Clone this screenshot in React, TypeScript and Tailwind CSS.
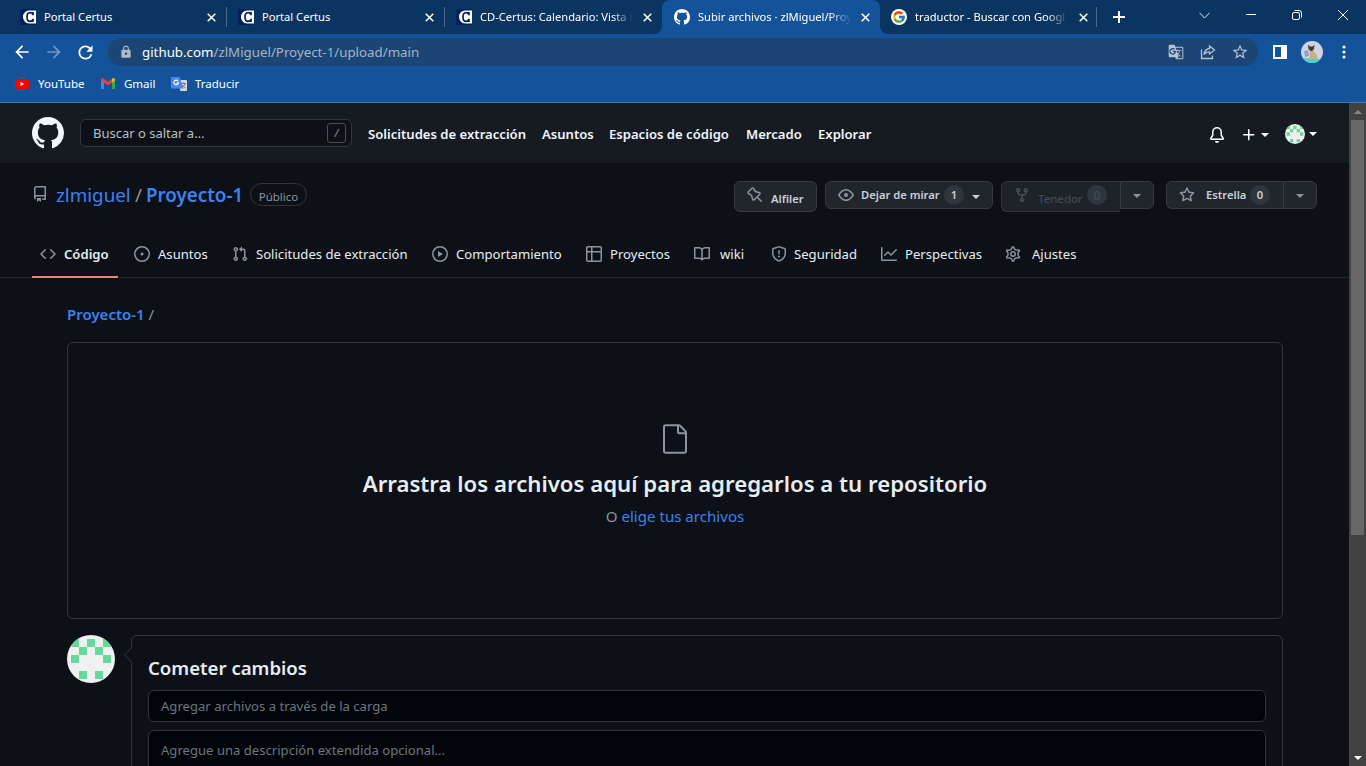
import React from "react";
import { FcGoogle } from "react-icons/fc";
import { MdLock, MdRefresh, MdArrowBack, MdArrowForward, MdStarBorder, MdGTranslate } from "react-icons/md";

const P = {
  mark: "M8 0C3.58 0 0 3.58 0 8c0 3.54 2.29 6.53 5.47 7.59.4.07.55-.17.55-.38 0-.19-.01-.82-.01-1.49-2.01.37-2.53-.49-2.69-.94-.09-.23-.48-.94-.82-1.13-.28-.15-.68-.52-.01-.53.63-.01 1.08.58 1.23.82.72 1.21 1.87.87 2.33.66.07-.52.28-.87.51-1.07-1.78-.2-3.64-.89-3.64-3.95 0-.87.31-1.59.82-2.15-.08-.2-.36-1.02.08-2.12 0 0 .67-.21 2.2.82.64-.18 1.32-.27 2-.27.68 0 1.36.09 2 .27 1.53-1.04 2.2-.82 2.2-.82.44 1.1.16 1.92.08 2.12.51.56.82 1.27.82 2.15 0 3.07-1.87 3.75-3.65 3.95.29.25.54.73.54 1.48 0 1.07-.01 1.93-.01 2.2 0 .21.15.46.55.38A8.013 8.013 0 0016 8c0-4.42-3.58-8-8-8z",
  code: "M4.72 3.22a.75.75 0 011.06 1.06L2.06 8l3.72 3.72a.75.75 0 11-1.06 1.06L.47 8.53a.75.75 0 010-1.06l4.25-4.25zm6.56 0a.75.75 0 10-1.06 1.06L13.94 8l-3.72 3.72a.75.75 0 101.06 1.06l4.25-4.25a.75.75 0 000-1.06l-4.25-4.25z",
  issue: "M8 9.5a1.5 1.5 0 100-3 1.5 1.5 0 000 3zM8 0a8 8 0 100 16A8 8 0 008 0zM1.5 8a6.5 6.5 0 1113 0 6.5 6.5 0 01-13 0z",
  pull: "M7.177 3.073L9.573.677A.25.25 0 0110 .854v4.792a.25.25 0 01-.427.177L7.177 3.427a.25.25 0 010-.354zM3.75 2.5a.75.75 0 100 1.5.75.75 0 000-1.5zm-2.25.75a2.25 2.25 0 113 2.122v5.256a2.251 2.251 0 11-1.5 0V5.372A2.25 2.25 0 011.5 3.25zM11 2.5h-1V4h1a1 1 0 011 1v5.628a2.251 2.251 0 101.5 0V5A2.5 2.5 0 0011 2.5zm1 10.25a.75.75 0 111.5 0 .75.75 0 01-1.5 0zM3.75 12a.75.75 0 100 1.5.75.75 0 000-1.5z",
  play: "M1.5 8a6.5 6.5 0 1113 0 6.5 6.5 0 01-13 0zM8 0a8 8 0 100 16A8 8 0 008 0zM6.379 5.227A.25.25 0 006 5.442v5.117a.25.25 0 00.379.214l4.264-2.559a.25.25 0 000-.428L6.379 5.227z",
  table: "M0 1.75C0 .784.784 0 1.75 0h12.5C15.216 0 16 .784 16 1.75v12.5A1.75 1.75 0 0114.25 16H1.75A1.75 1.75 0 010 14.25V1.75zM1.5 6.5v7.75c0 .138.112.25.25.25H5v-8H1.5zM5 5H1.5V1.75a.25.25 0 01.25-.25H5V5zm1.5 1.5v8h7.75a.25.25 0 00.25-.25V6.5h-8zm8-1.5h-8V1.5h7.75a.25.25 0 01.25.25V5z",
  book: "M0 1.75A.75.75 0 01.75 1h4.253c1.227 0 2.317.59 3 1.501A3.744 3.744 0 0111.006 1h4.245a.75.75 0 01.75.75v10.5a.75.75 0 01-.75.75h-4.507a2.25 2.25 0 00-1.591.659l-.622.621a.75.75 0 01-1.06 0l-.622-.621A2.25 2.25 0 005.258 13H.75a.75.75 0 01-.75-.75V1.75zm8.755 3a2.25 2.25 0 012.25-2.25H14.5v9h-3.757c-.71 0-1.4.201-1.992.572l.004-7.322zm-1.504 7.324l.004-5.073-.002-2.253A2.25 2.25 0 005.003 2.5H1.5v9h3.757a3.75 3.75 0 011.994.574z",
  shield: "M7.467.133a1.75 1.75 0 011.066 0l5.25 1.68A1.75 1.75 0 0115 3.48V7c0 1.566-.32 3.182-1.303 4.682-.983 1.498-2.585 2.813-5.032 3.855a1.7 1.7 0 01-1.33 0c-2.447-1.042-4.049-2.357-5.032-3.855C1.32 10.182 1 8.566 1 7V3.48a1.75 1.75 0 011.217-1.667l5.25-1.68zm.61 1.429a.25.25 0 00-.153 0l-5.25 1.68a.25.25 0 00-.174.238V7c0 1.358.275 2.666 1.057 3.86.784 1.194 2.121 2.34 4.366 3.297a.2.2 0 00.154 0c2.245-.956 3.582-2.104 4.366-3.298C13.225 9.666 13.5 8.36 13.5 7V3.48a.25.25 0 00-.174-.237l-5.25-1.68zM9 10.5a1 1 0 11-2 0 1 1 0 012 0zm-.25-5.75a.75.75 0 10-1.5 0v3a.75.75 0 001.5 0v-3z",
  graph: "M1.5 1.75a.75.75 0 00-1.5 0v12.5c0 .414.336.75.75.75h14.5a.75.75 0 000-1.5H1.5V1.75zm14.28 2.53a.75.75 0 00-1.06-1.06L10 7.94 7.53 5.47a.75.75 0 00-1.06 0L3.22 8.72a.75.75 0 001.06 1.06L7 7.06l2.47 2.47a.75.75 0 001.06 0l5.25-5.25z",
  repo: "M2 2.5A2.5 2.5 0 014.5 0h8.75a.75.75 0 01.75.75v12.5a.75.75 0 01-.75.75h-2.5a.75.75 0 110-1.5h1.75v-2h-8a1 1 0 00-.714 1.7.75.75 0 01-1.072 1.05A2.495 2.495 0 012 11.5v-9zm10.5-1V9h-8c-.356 0-.694.074-1 .208V2.5a1 1 0 011-1h8zM5 12.25v3.25a.25.25 0 00.4.2l1.45-1.087a.25.25 0 01.3 0L8.6 15.7a.25.25 0 00.4-.2v-3.25a.25.25 0 00-.25-.25h-3.5a.25.25 0 00-.25.25z",
  eye: "M1.679 7.932c.412-.621 1.242-1.75 2.366-2.717C5.175 4.242 6.527 3.5 8 3.5c1.473 0 2.824.742 3.955 1.715 1.124.967 1.954 2.096 2.366 2.717a.119.119 0 010 .136c-.412.621-1.242 1.75-2.366 2.717C10.825 11.758 9.473 12.5 8 12.5c-1.473 0-2.824-.742-3.955-1.715C2.92 9.818 2.09 8.69 1.679 8.068a.119.119 0 010-.136zM8 2c-1.981 0-3.67.992-4.933 2.078C1.797 5.169.88 6.423.43 7.1a1.619 1.619 0 000 1.798c.45.678 1.367 1.932 2.637 3.024C4.329 13.008 6.019 14 8 14c1.981 0 3.67-.992 4.933-2.078 1.27-1.091 2.187-2.345 2.637-3.023a1.619 1.619 0 000-1.798c-.45-.678-1.367-1.932-2.637-3.023C11.671 2.992 9.981 2 8 2zm0 8a2 2 0 100-4 2 2 0 000 4z",
  star: "M8 .25a.75.75 0 01.673.418l1.882 3.815 4.21.612a.75.75 0 01.416 1.279l-3.046 2.97.719 4.192a.75.75 0 01-1.088.791L8 12.347l-3.766 1.98a.75.75 0 01-1.088-.79l.72-4.194L.818 6.374a.75.75 0 01.416-1.28l4.21-.611L7.327.668A.75.75 0 018 .25zm0 2.445L6.615 5.5a.75.75 0 01-.564.41l-3.097.45 2.24 2.184a.75.75 0 01.216.664l-.528 3.084 2.769-1.456a.75.75 0 01.698 0l2.77 1.456-.53-3.084a.75.75 0 01.216-.664l2.24-2.183-3.096-.45a.75.75 0 01-.564-.41L8 2.694v.001z",
  fork: "M5 3.25a.75.75 0 11-1.5 0 .75.75 0 011.5 0zm0 2.122a2.25 2.25 0 10-1.5 0v.878A2.25 2.25 0 005.75 8.5h1.5v2.128a2.251 2.251 0 101.5 0V8.5h1.5a2.25 2.25 0 002.25-2.25v-.878a2.25 2.25 0 10-1.5 0v.878a.75.75 0 01-.75.75h-4.5A.75.75 0 015 6.25v-.878zm3.75 7.378a.75.75 0 11-1.5 0 .75.75 0 011.5 0zm3-8.75a.75.75 0 100-1.5.75.75 0 000 1.5z",
  bell: "M8 16a2 2 0 001.985-1.75c.017-.137-.097-.25-.235-.25h-3.5c-.138 0-.252.113-.235.25A2 2 0 008 16zM8 1.5A3.5 3.5 0 004.5 5v2.947c0 .346-.102.683-.294.97l-1.703 2.556a.018.018 0 00-.003.01l.001.006c0 .002.002.004.004.006a.017.017 0 00.006.004l.007.001h10.964l.007-.001a.016.016 0 00.006-.004.016.016 0 00.004-.006l.001-.007a.017.017 0 00-.003-.01l-1.703-2.554a1.75 1.75 0 01-.294-.97V5A3.5 3.5 0 008 1.5zM3 5a5 5 0 0110 0v2.947c0 .05.015.098.042.139l1.703 2.555A1.518 1.518 0 0113.482 13H2.518a1.518 1.518 0 01-1.263-2.36l1.703-2.554A.25.25 0 003 7.947V5z",
  plus: "M7.75 2a.75.75 0 01.75.75V7h4.25a.75.75 0 110 1.5H8.5v4.25a.75.75 0 11-1.5 0V8.5H2.75a.75.75 0 010-1.5H7V2.75A.75.75 0 017.75 2z",
  pin: "M4.456.734a1.75 1.75 0 012.826.504l.613 1.327a3.081 3.081 0 002.084 1.707l2.454.584c1.332.317 1.8 1.972.832 2.94L11.06 10l3.72 3.72a.75.75 0 11-1.061 1.06L10 11.06l-2.204 2.205c-.968.968-2.623.5-2.94-.832l-.584-2.454a3.081 3.081 0 00-1.707-2.084l-1.327-.613a1.75 1.75 0 01-.504-2.826L4.456.734zM5.92 1.866a.25.25 0 00-.404-.072L1.794 5.516a.25.25 0 00.072.404l1.328.613A4.582 4.582 0 015.73 9.63l.584 2.454a.25.25 0 00.42.12l5.47-5.47a.25.25 0 00-.12-.42L9.63 5.73a4.581 4.581 0 01-3.098-2.537L5.92 1.866z",
};

function Octicon({ d, className = "" }: { d: string; className?: string }) {
  return (
    <svg viewBox="0 0 16 16" fill="currentColor" fillRule="evenodd" className={`shrink-0 ${className}`}>
      <path d={d} />
    </svg>
  );
}

function Gear() {
  return (
    <svg viewBox="0 0 16 16" fill="none" stroke="currentColor" className="size-4 shrink-0">
      <path
        transform="translate(8 8) scale(1.1) translate(-8 -8)"
        strokeWidth="1.3"
        d="M7.429 1.525a6.593 6.593 0 011.142 0c.036.003.108.036.137.146l.289 1.105c.147.56.55.967.997 1.189.174.086.341.183.501.29.417.278.97.423 1.53.27l1.102-.303c.11-.03.175.016.195.046.219.31.41.641.573.989.014.031.022.11-.059.19l-.815.806c-.411.406-.562.957-.53 1.456a4.588 4.588 0 010 .582c-.032.499.119 1.05.53 1.456l.815.806c.08.08.073.159.059.19a6.494 6.494 0 01-.573.99c-.02.029-.086.074-.195.045l-1.103-.303c-.559-.153-1.112-.008-1.529.27-.16.107-.327.204-.5.29-.449.222-.851.628-.998 1.189l-.289 1.105c-.029.11-.101.143-.137.146a6.613 6.613 0 01-1.142 0c-.036-.003-.108-.037-.137-.146l-.289-1.105c-.147-.56-.55-.967-.997-1.189a4.502 4.502 0 01-.501-.29c-.417-.278-.97-.423-1.53-.27l-1.102.303c-.11.03-.175-.016-.195-.046a6.492 6.492 0 01-.573-.989c-.014-.031-.022-.11.059-.19l.815-.806c.411-.406.562-.957.53-1.456a4.587 4.587 0 010-.582c.032-.499-.119-1.05-.53-1.456l-.815-.806c-.08-.08-.073-.159-.059-.19a6.44 6.44 0 01.573-.99c.02-.029.086-.075.195-.045l1.103.303c.559.153 1.112.008 1.529-.27.16-.107.327-.204.5-.29.449-.222.851-.628.998-1.189l.289-1.105c.029-.11.101-.143.137-.146z"
      />
      <circle cx="8" cy="8" r="2.2" strokeWidth="1.5" />
    </svg>
  );
}

function Caret({ className = "" }: { className?: string }) {
  return (
    <svg viewBox="0 0 8 4" fill="currentColor" className={`h-1 w-2 shrink-0 ${className}`}>
      <path d="M0 0h8L4 4z" />
    </svg>
  );
}

function Identicon({ className = "" }: { className?: string }) {
  return (
    <svg viewBox="0 0 48 48" className={`shrink-0 rounded-full ${className}`}>
      <rect width="48" height="48" fill="#f0f0f0" />
      <path
        fill="#67d89a"
        d="M4 4h8v8H4zM20 4h8v8h-8zM36 4h8v8h-8zM12 12h8v8h-8zM28 12h8v8h-8zM4 20h8v8H4zM36 20h8v8h-8zM12 36h8v8h-8zM28 36h8v8h-8z"
      />
    </svg>
  );
}

function Close() {
  return (
    <svg viewBox="0 0 10 10" stroke="white" strokeWidth="1.7" className="size-[9px] shrink-0">
      <path d="M.8.8l8.4 8.4M9.2.8L.8 9.2" />
    </svg>
  );
}

function CertusIcon() {
  return (
    <svg viewBox="0 0 16 16" className="size-4 shrink-0">
      <rect width="16" height="16" fill="#04205e" />
      <path d="M9 1.5h7v13H9A6.3 6.3 0 0 1 3 8a6.3 6.3 0 0 1 6-6.5z" fill="white" />
      <path d="M13 3v3.3M13 13v-3.2M13 5.6C12.3 4 11.2 3.7 10 3.7 8 3.7 7 5.3 7 8s1 4.4 3 4.4c1.3 0 2.5-.6 3-2" stroke="#04205e" strokeWidth="1.7" fill="none" />
    </svg>
  );
}

function Tab({ icon, title, fade = false, active = false }: { icon: React.ReactNode; title: string; fade?: boolean; active?: boolean }) {
  return (
    <div className={`relative flex h-[34px] w-[218px] shrink-0 items-center pr-[10px] pl-3 ${active ? "rounded-t-lg bg-[#14539a]" : ""}`}>
      {icon}
      <span
        className={`ml-2 w-[153px] overflow-hidden text-[11.15px] whitespace-nowrap text-white ${fade ? "[mask-image:linear-gradient(to_right,black_86%,transparent)]" : ""}`}
      >
        {title}
      </span>
      <span className="ml-auto flex">
        <Close />
      </span>
      {active && (
        <>
          <svg viewBox="0 0 8 8" className="absolute bottom-0 -left-2 size-2 fill-[#14539a]"><path d="M8 0v8H0a8 8 0 0 0 8-8z" /></svg>
          <svg viewBox="0 0 8 8" className="absolute -right-2 bottom-0 size-2 fill-[#14539a]"><path d="M0 0v8h8a8 8 0 0 1-8-8z" /></svg>
        </>
      )}
    </div>
  );
}

function TabStrip() {
  return (
    <div className="flex h-[34px] items-center bg-[#0b3561] pl-2">
      <Tab icon={<CertusIcon />} title="Portal Certus" />
      <div className="-mr-px h-5 w-px bg-[#4a6c93]" />
      <Tab icon={<CertusIcon />} title="Portal Certus" />
      <div className="-mr-px h-5 w-px bg-[#4a6c93]" />
      <Tab icon={<CertusIcon />} title="CD-Certus: Calendario: Vista m" fade />
      <Tab icon={<Octicon d={P.mark} className="size-4 text-white" />} title="Subir archivos · zlMiguel/Proy" fade active />
      <Tab
        icon={<span className="-ml-px flex size-4 items-center justify-center rounded-full bg-white"><FcGoogle className="size-[14px]" /></span>}
        title="traductor - Buscar con Googl"
        fade
      />
      <div className="-ml-[2px] h-5 w-px bg-[#4a6c93]" />
      <svg viewBox="0 0 12 12" className="ml-4 size-3" stroke="white" strokeWidth="2"><path d="M6 0v12M0 6h12" /></svg>
      <div className="mb-1 ml-auto flex items-center pr-[18px]">
        <svg viewBox="0 0 11 7" className="mr-[36px] h-[7px] w-[11px]" fill="none" stroke="#dfe6ee"><path d="M.5.8l5 5.2 5-5.2" /></svg>
        <svg viewBox="0 0 10 10" className="mr-[36px] size-[10px]" stroke="white"><path d="M0 4.500h10" /></svg>
        <svg viewBox="0 0 10 10" className="mr-[36px] size-[10px]" fill="none" stroke="white"><rect x=".5" y="2.5" width="7" height="7" rx="1.5" /><path d="M2.500.5H7A2.500 2.500 0 0 1 9.500 3v4.500" /></svg>
        <svg viewBox="0 0 10 10" className="size-[10px]" stroke="white"><path d="M0 0l10 10M10 0L0 10" /></svg>
      </div>
    </div>
  );
}

function AddressBar() {
  return (
    <div className="flex h-9 items-center bg-[#14539a] pl-3 text-white">
      <MdArrowBack className="size-[20px]" />
      <MdArrowForward className="ml-3 size-[20px] text-[#7398c4]" />
      <MdRefresh className="ml-[11px] size-[21px]" />
      <div className="ml-3 flex h-7 w-[1150px] items-center rounded-full bg-[#1a4574] pr-[10px] pl-[11px]">
        <MdLock className="size-[14px] text-[#aeb9c8]" />
        <span className="ml-[9px] pt-px text-[13.3px] whitespace-nowrap text-[#a3b5c7]">
          <span className="text-white">github.com</span>/zlMiguel/Proyect-1/upload/main
        </span>
        <div className="ml-auto flex items-center gap-4 text-[#b8c2cf]">
          <MdGTranslate className="size-4" />
          <svg viewBox="0 0 16 16" className="size-4" fill="none" stroke="currentColor" strokeWidth="1.3">
            <path d="M1.500 5.500v9h11v-3" /><path d="M9.500 2l5 4-5 4V7.800c-2.600 0-4.200.9-5.500 2.700.4-3 2-5.500 5.500-6z" />
          </svg>
          <MdStarBorder className="-mx-px size-[18px]" />
        </div>
      </div>
      <svg viewBox="0 0 14 14" className="ml-[15px] size-[14px]"><path fill="white" fillRule="evenodd" d="M0 0h14v14H0zM2 2v10h6V2z" /></svg>
      <svg viewBox="0 0 22 22" className="ml-[14px] size-[22px] rounded-full">
        <rect width="22" height="22" fill="#cfd3e6" />
        <path d="M0 17l22 1v4H0z" fill="#4fd0c4" />
        <path d="M3 10l4-1 1 6-4 1z" fill="#9aa0bc" />
        <path d="M8.500 7h3.500l1 4c2.500 1.500 3.500 3.500 3.500 7H8.500c.5-3 .5-5 0-7z" fill="#c9b08a" />
        <path d="M7 3.500l2 2h2.500l2-2-.5 4.500-2 2H9.500l-2-2z" fill="#4a382e" />
      </svg>
      <svg viewBox="0 0 4 14" className="ml-[19px] h-[14px] w-1" fill="white"><circle cx="2" cy="2" r="1.6" /><circle cx="2" cy="7" r="1.6" /><circle cx="2" cy="12" r="1.6" /></svg>
    </div>
  );
}

function Bookmarks() {
  return (
    <div className="flex h-[33px] items-center border-b border-[#3f78b8] bg-[#14539a] pb-[5px] pl-[15px] text-[11.5px] whitespace-nowrap text-white">
      <svg viewBox="0 0 14 10" className="h-[10px] w-[14px]"><rect width="14" height="10" rx="2.5" fill="#f00" /><path d="M5.500 3l3.800 2-3.800 2z" fill="white" /></svg>
      <span className="ml-[9px] w-[46px]">YouTube</span>
      <svg viewBox="0 0 14 11" className="ml-[17px] h-[11px] w-[14px]">
        <path d="M0 1.500V11h3V4z" fill="#4285f4" /><path d="M14 1.500V11h-3V4z" fill="#34a853" />
        <path d="M0 1.500C0 .3 1.500-.3 2.500.5L7 4 11.500.5 11 4.500 7 7.500 0 2.500z" fill="#ea4335" /><path d="M11 1l.5-.5C12.500-.3 14 .3 14 1.500v1L11 4.700z" fill="#fbbc04" />
      </svg>
      <span className="ml-[9px] w-[31px]">Gmail</span>
      <TranslateLogo />
      <span className="ml-[8px]">Traducir</span>
    </div>
  );
}

function TranslateLogo() {
  return (
    <svg viewBox="0 0 16 16" className="ml-[16px] size-4">
      <path d="M6 4h9a1 1 0 0 1 1 1v9a1 1 0 0 1-1 1H9.500z" fill="#d5dae0" />
      <path d="M1 1h7.500l4 11.500H1a1 1 0 0 1-1-1V2a1 1 0 0 1 1-1z" fill="#4a86ee" />
      <path d="M7.200 5.200a2.300 2.300 0 1 0 .3 1.800H5.200" stroke="white" strokeWidth="1.1" fill="none" />
      <path d="M10.500 7.500H15M12.500 6.500v1M14 7.500c-.5 2-1.500 3.500-3 4.500M11.500 9c.7 1.400 1.500 2.200 3 3" stroke="#63707e" strokeWidth=".9" fill="none" />
    </svg>
  );
}

function SiteHeader() {
  return (
    <header className="flex h-[60px] items-center bg-[#161b22] pr-8 pl-8 text-white">
      <Octicon d={P.mark} className="size-8 text-[#f0f6fc]" />
      <div className="ml-4 flex h-7 w-[272px] items-center justify-between rounded-md border border-[#30363d] bg-[#0d1117] pr-[5px] pl-3">
        <span className="pt-px text-[13px] whitespace-nowrap text-[#b9bec4]">Buscar o saltar a...</span>
        <span className="flex h-5 w-[19px] items-center justify-center rounded-[3px] border border-[#484f58] text-[11px] text-[#8b949e] italic">/</span>
      </div>
      <nav className="ml-4 flex pt-[3px] text-[13.1px] font-semibold whitespace-nowrap text-[#f0f6fc]">
        <span className="w-[174px]">Solicitudes de extracción</span>
        <span className="w-[67px]">Asuntos</span>
        <span className="w-[137px]">Espacios de código</span>
        <span className="w-[72px]">Mercado</span>
        <span>Explorar</span>
      </nav>
      <div className="ml-auto flex items-center">
        <Octicon d={P.bell} className="mt-1 size-4" />
        <Octicon d={P.plus} className="mt-[3px] ml-4 size-4" />
        <Caret className="mt-[3px] ml-1" />
        <Identicon className="mt-0.5 ml-4 size-5" />
        <Caret className="mt-0.5 ml-1" />
      </div>
    </header>
  );
}

function RepoTitle() {
  return (
    <div className="flex h-[52px] items-start px-8 pt-[18px] whitespace-nowrap">
      <Octicon d={P.repo} className="mt-[5px] size-4 text-[#8b949e]" />
      <div className="ml-2 flex text-[18.8px] leading-[28px] text-[#3b82f0]">
        <span className="w-[79px]">zlmiguel</span>
        <span className="w-[11px] text-[#8b949e]">/</span>
        <span className="w-[104px] font-semibold">Proyecto-1</span>
      </div>
      <span className="mt-[2px] flex h-[23px] w-[57px] items-center justify-center rounded-full border border-[#30363d] pt-[4px] text-[11.5px] text-[#8b949e]">Público</span>
      <Actions />
    </div>
  );
}

function Count({ n }: { n: number }) {
  return <span className="flex size-5 items-center justify-center rounded-full bg-[#30363d] pt-px">{n}</span>;
}

function Actions() {
  return (
    <div className="ml-auto flex items-start text-[11.2px] font-semibold text-[#c9d1d9]">
      <div className="flex h-[31px] w-[83px] rounded-md border border-[#363b42] bg-[#21262d] pl-3">
        <Octicon d={P.pin} className="mt-[5px] size-4 text-[#8b949e]" />
        <span className="mt-[9px] ml-2 leading-4">Alfiler</span>
      </div>
      <div className="ml-2 flex h-7 w-[168px] items-center rounded-md border border-[#363b42] bg-[#21262d] pl-3">
        <Octicon d={P.eye} className="size-4 text-[#8b949e]" />
        <span className="ml-[7px] w-[79px] pt-px">Dejar de mirar</span>
        <span className="ml-1"><Count n={1} /></span>
        <Caret className="mt-[3px] ml-2" />
      </div>
      <div className="ml-2 flex items-start">
        <div className="flex h-[31px] w-[119px] rounded-l-md border border-r-0 border-[#30353c] bg-[#1e2329] pl-3 font-normal text-[#484f58]">
          <Octicon d={P.fork} className="mt-[5px] size-4" />
          <span className="mt-[9px] ml-2 w-[45px] text-[11.6px] leading-4">Tenedor</span>
          <span className="mt-[3px] ml-1 text-[12px]"><Count n={0} /></span>
        </div>
        <div className="flex h-7 w-[34px] items-center justify-center rounded-r-md border border-[#363b42] bg-[#21262d] pt-px text-[#8b949e]"><Caret /></div>
      </div>
      <div className="ml-3 flex">
        <div className="flex h-7 w-[117px] items-center rounded-l-md border border-r-0 border-[#363b42] bg-[#21262d] pl-3">
          <Octicon d={P.star} className="size-4 text-[#8b949e]" />
          <span className="ml-[11px] w-[40px] pt-px">Estrella</span>
          <span className="ml-1"><Count n={0} /></span>
        </div>
        <div className="flex h-7 w-[34px] items-center justify-center rounded-r-md border border-[#363b42] bg-[#21262d] pt-px text-[#8b949e]"><Caret /></div>
      </div>
    </div>
  );
}

function NavItem({ icon, label, className }: { icon: React.ReactNode; label: string; className: string }) {
  return (
    <div className={`flex h-[47px] shrink-0 items-center gap-2 ${className}`}>
      <span className="text-[#8b949e]">{icon}</span>
      <span className="pt-0.5 whitespace-nowrap">{label}</span>
    </div>
  );
}

function RepoNav() {
  return (
    <nav className="mt-4 flex h-[47px] items-center border-b border-[#21262d] px-8 text-[13.1px] text-[#e6edf3]">
      <div className="h-[47px] w-[86px] shrink-0 border-b-2 border-[#f78166] font-semibold">
        <NavItem icon={<Octicon d={P.code} className="size-4" />} label="Código" className="pl-2" />
      </div>
      <NavItem icon={<Octicon d={P.issue} className="size-4" />} label="Asuntos" className="w-[114px] pl-4" />
      <NavItem icon={<Octicon d={P.pull} className="size-4" />} label="Solicitudes de extracción" className="w-[200px]" />
      <NavItem icon={<Octicon d={P.play} className="size-4" />} label="Comportamiento" className="w-[154px]" />
      <NavItem icon={<Octicon d={P.table} className="size-4" />} label="Proyectos" className="w-[108px]" />
      <NavItem icon={<Octicon d={P.book} className="size-4" />} label="wiki" className="w-[77px] gap-[10px]" />
      <NavItem icon={<Octicon d={P.shield} className="size-4" />} label="Seguridad" className="w-[110px] gap-[7px]" />
      <NavItem icon={<Octicon d={P.graph} className="size-4" />} label="Perspectivas" className="w-[124px]" />
      <NavItem icon={<Gear />} label="Ajustes" className="gap-[11px]" />
    </nav>
  );
}

function DropZone() {
  return (
    <div className="mt-[17px] flex h-[277px] flex-col items-center rounded-md border border-[#30363d] pt-[80px] whitespace-nowrap">
      <svg viewBox="0 0 24 24" fillRule="evenodd" className="size-8 fill-[#8b949e]">
        <path d="M5 2.500a.5.500 0 00-.5.500v18a.5.500 0 00.5.500h14a.5.500 0 00.5-.5V8.500h-4a2 2 0 01-2-2v-4H5zm10 0v4a.5.500 0 00.5.500h4a.5.500 0 00-.146-.336l-4.018-4.018A.5.500 0 0015 2.500zM3 3a2 2 0 012-2h9.982a2 2 0 011.414.586l4.018 4.018A2 2 0 0121 7.018V21a2 2 0 01-2 2H5a2 2 0 01-2-2V3z" />
      </svg>
      <h2 className="mt-[11px] text-[22.2px] leading-[36px] font-semibold text-[#e6edf3]">Arrastra los archivos aquí para agregarlos a tu repositorio</h2>
      <p className="mt-[2px] text-[15.1px] leading-6 text-[#8b949e]">O <span className="text-[#3b82f0]">elige tus archivos</span></p>
    </div>
  );
}

function CommitForm() {
  return (
    <div className="mt-4 flex items-start">
      <Identicon className="size-12" />
      <div className="relative ml-4 h-[200px] flex-1 rounded-md border border-[#30363d] px-4 pt-[14px]">
        <svg viewBox="0 0 8 16" className="absolute top-[11px] -left-2 h-4 w-2 overflow-visible"><path d="M8 0L.7 8 8 16z" fill="#0d1117" /><path d="M7.500.5L.7 8l6.800 7.500" fill="none" stroke="#30363d" /></svg>
        <h3 className="text-[18.6px] leading-9 font-semibold text-[#e6edf3]">Cometer cambios</h3>
        <div className="mt-1 flex h-8 items-center rounded-md border border-[#30363d] bg-[#010409] px-3 pt-px text-[13.1px] text-[#6e7681]">Agregar archivos a través de la carga</div>
        <div className="mt-2 h-[100px] rounded-md border border-[#30363d] bg-[#010409] px-3 pt-[9px] text-[13.1px] leading-5 text-[#6e7681]">Agregue una descripción extendida opcional...</div>
      </div>
    </div>
  );
}

function Scrollbar() {
  return (
    <div className="flex w-[17px] shrink-0 flex-col items-center bg-[#424242]">
      <div className="flex h-[17px] items-center"><Caret className="rotate-180 text-[#868686]" /></div>
      <div className="h-[415px] w-[13px] bg-[#686868]" />
      <div className="mt-auto flex h-[17px] items-center text-white"><Caret /></div>
    </div>
  );
}

export default function App() {
  return (
    <div className="flex h-[766px] w-[1366px] flex-col overflow-hidden bg-[#0d1117] font-['Noto_Sans','Open_Sans',sans-serif]">
      <TabStrip />
      <AddressBar />
      <Bookmarks />
      <div className="flex min-h-0 flex-1">
        <main className="min-w-0 flex-1 overflow-hidden">
          <SiteHeader />
          <RepoTitle />
          <RepoNav />
          <div className="pr-[66px] pl-[67px]">
            <p className="mt-[25px] text-[15px] leading-[22px] text-[#8b949e]"><span className="font-semibold text-[#3b82f0]">Proyecto-1</span> /</p>
            <DropZone />
            <CommitForm />
          </div>
        </main>
        <Scrollbar />
      </div>
    </div>
  );
}
